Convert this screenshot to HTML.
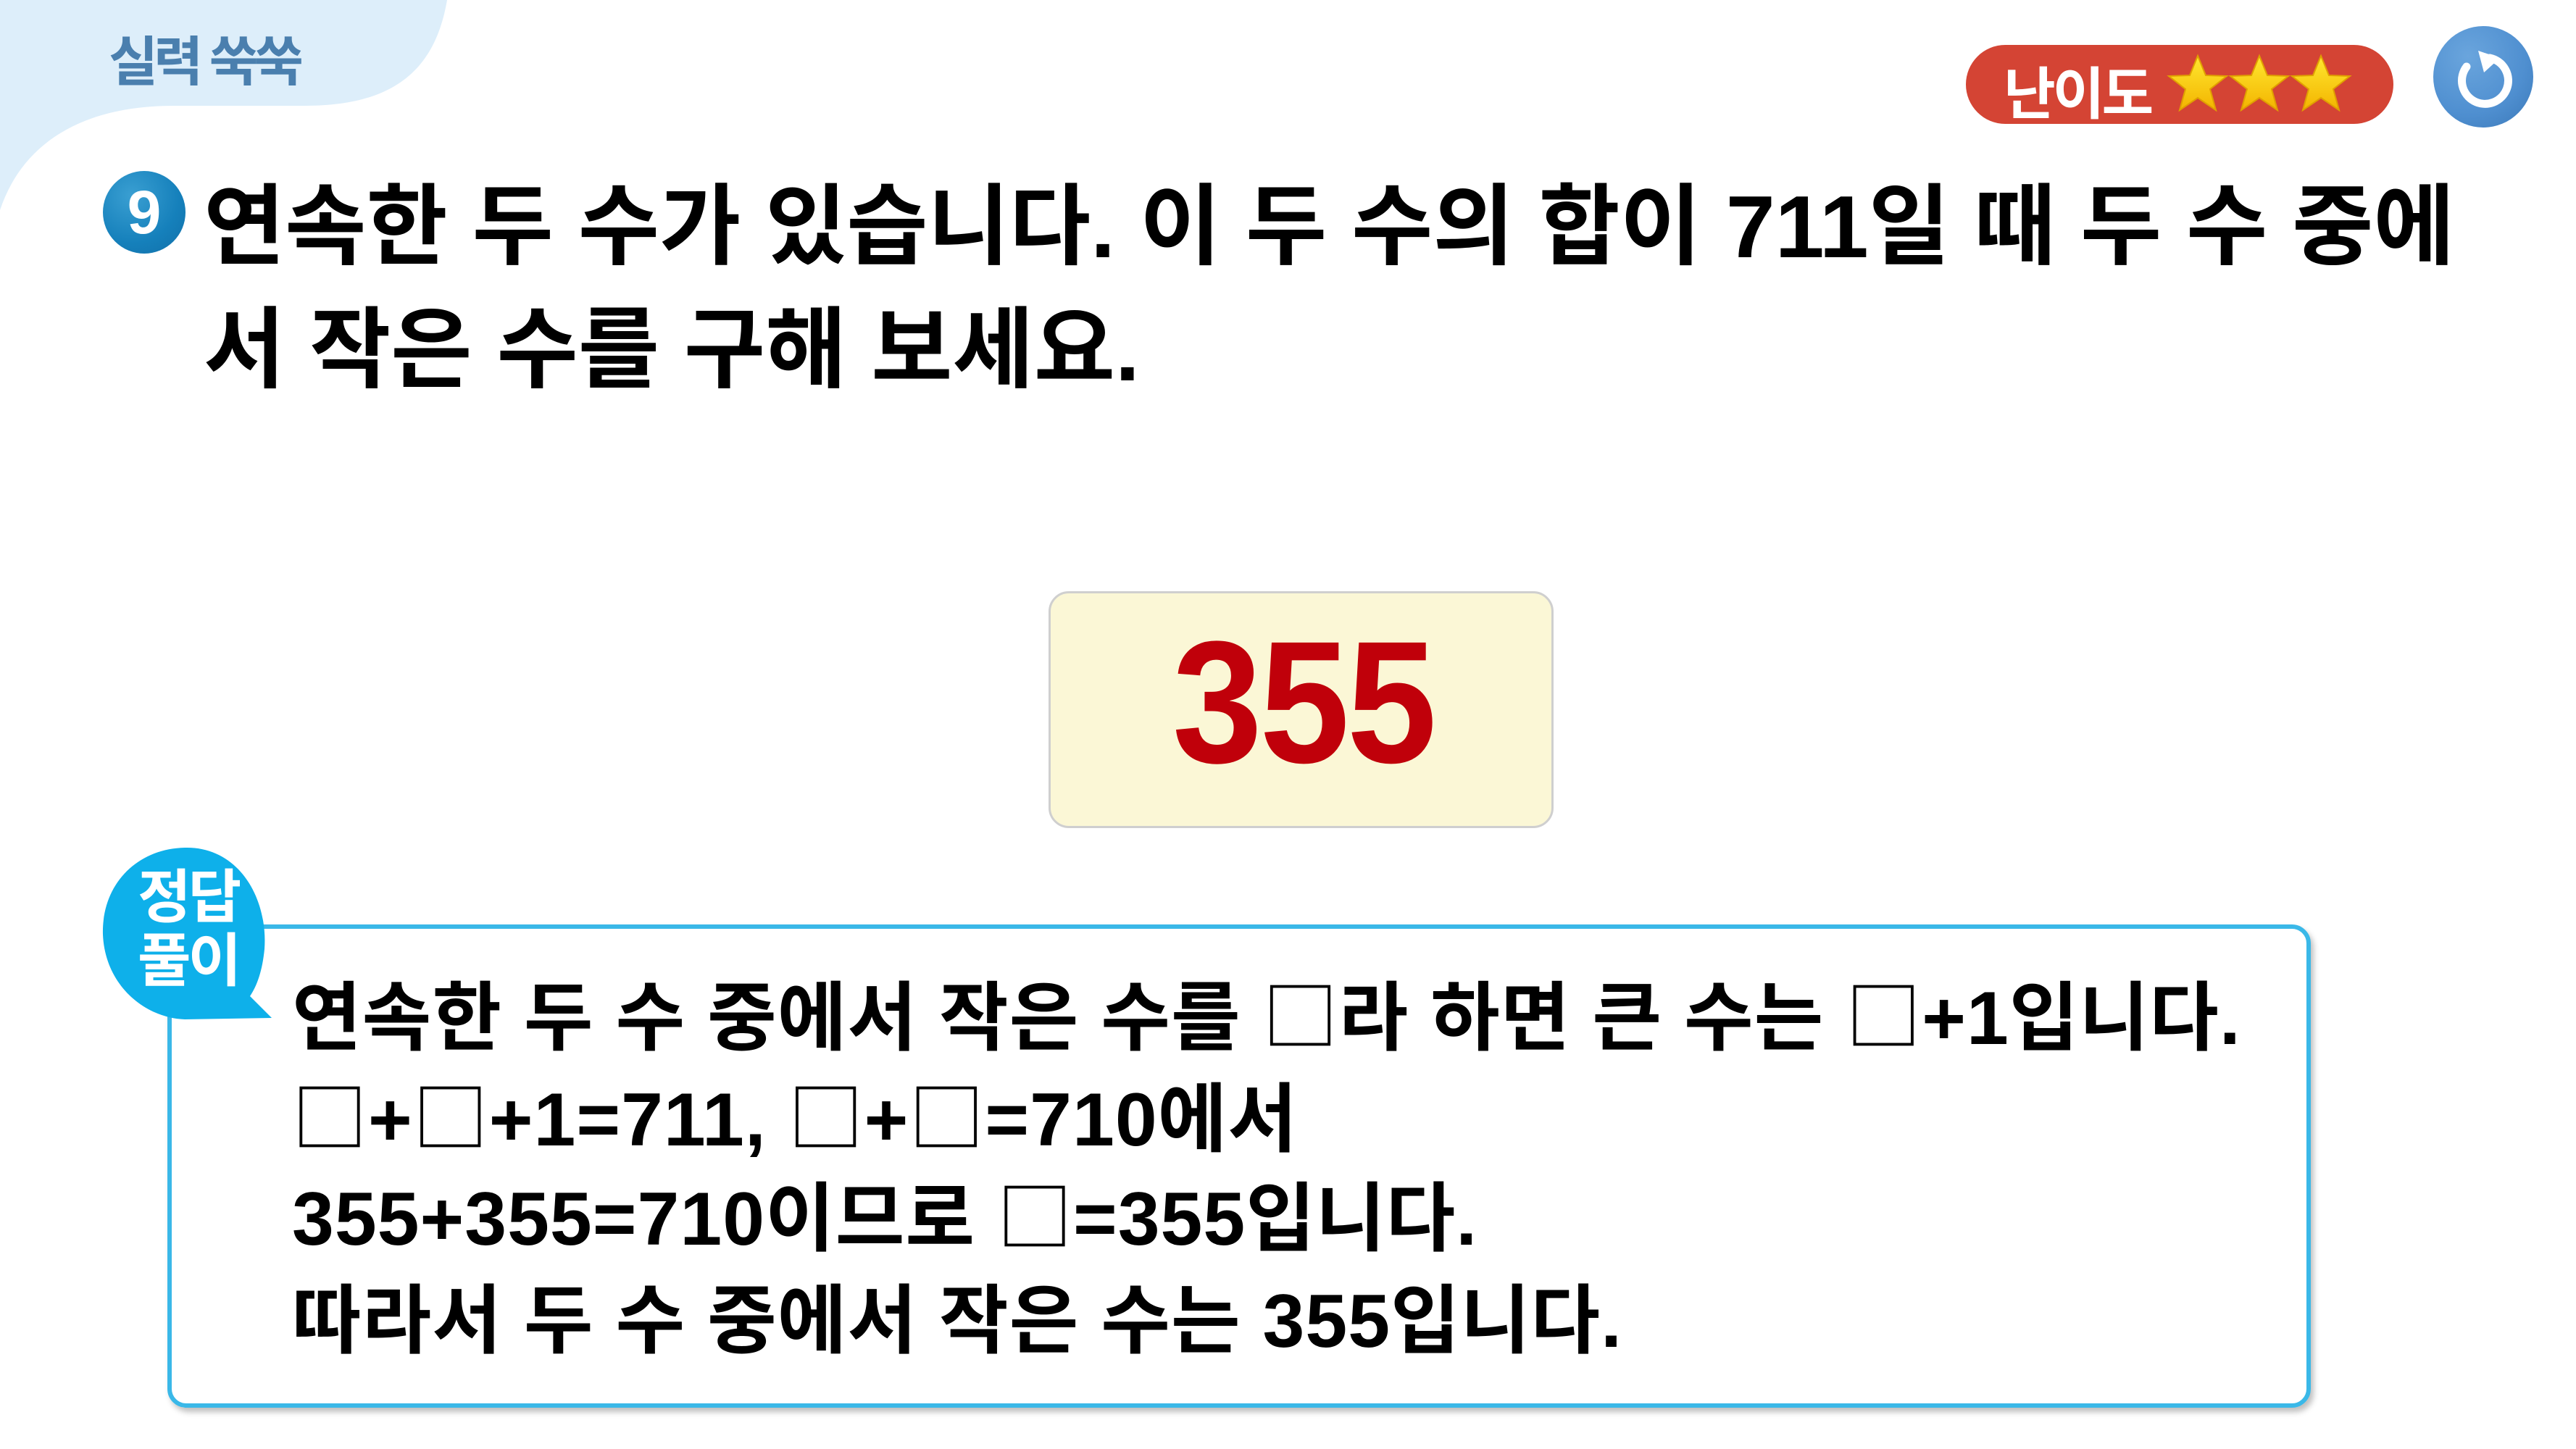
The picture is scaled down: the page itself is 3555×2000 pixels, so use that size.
<!DOCTYPE html>
<html><head><meta charset="utf-8"><style>
*{margin:0;padding:0;box-sizing:border-box}
body{width:3555px;height:2000px;background:#fff;position:relative;overflow:hidden;font-family:"Liberation Sans","Noto Sans CJK KR",sans-serif;font-weight:bold}
.abs{position:absolute}
.q{left:281px;font-size:122px;color:#000;white-space:nowrap;letter-spacing:0}
.e{left:403px;font-size:104px;color:#000;white-space:nowrap;letter-spacing:1px}
.s{font-family:"Noto Sans CJK KR",sans-serif;font-weight:normal}
</style></head><body>
<svg class="abs" style="left:0;top:0" width="700" height="320">
<path d="M0 0 H617 C600 100 540 146 420 146 H240 C110 146 30 200 0 290 Z" fill="#ddeefa"/>
</svg>
<div class="abs" style="left:150px;top:26px;font-size:74px;color:#4a7fae;letter-spacing:-6px">실력 쑥쑥</div>

<div class="abs" style="left:142px;top:236px;width:114px;height:114px;border-radius:50%;background:radial-gradient(circle at 35% 30%,#3a9fd2,#1580bb 60%,#136fa8);color:#fff;font-size:84px;text-align:center;line-height:114px">9</div>
<div class="abs q" style="top:214px">연속한 두 수가 있습니다. 이 두 수의 합이 711일 때 두 수 중에</div>
<div class="abs q" style="top:384px">서 작은 수를 구해 보세요.</div>

<div class="abs" style="left:2713px;top:62px;width:590px;height:109px;border-radius:55px;background:#d44434"></div>
<div class="abs" style="left:2765px;top:68px;font-size:78px;color:#fff;letter-spacing:-4px">난이도</div>
<svg class="abs" style="left:2990px;top:72px" width="280" height="90" viewBox="0 0 280 90">
<defs><linearGradient id="g" x1="0" y1="0" x2="0" y2="1"><stop offset="0" stop-color="#ffe830"/><stop offset="1" stop-color="#f3b400"/></linearGradient></defs>
<g fill="url(#g)" stroke="#e0a000" stroke-width="2">
<polygon points="43,5 54,32 83,33 60,51 68,80 43,63 18,80 26,51 3,33 32,32"/>
<polygon points="128,5 139,32 168,33 145,51 153,80 128,63 103,80 111,51 88,33 117,32"/>
<polygon points="213,5 224,32 253,33 230,51 238,80 213,63 188,80 196,51 173,33 202,32"/>
</g></svg>
<div class="abs" style="left:3358px;top:36px;width:138px;height:140px;border-radius:50%;background:radial-gradient(circle at 35% 30%,#6aa5dd,#4f8fd0 60%,#3a78b8)"></div>
<svg class="abs" style="left:3358px;top:36px" width="138" height="140" viewBox="0 0 138 140">
<path d="M78 44 A32 32 0 1 1 46 56" fill="none" stroke="#fff" stroke-width="11" stroke-linecap="round"/>
<polygon points="62,34 92,44 70,64" fill="#fff"/>
</svg>

<div class="abs" style="left:1447px;top:816px;width:697px;height:327px;background:#fbf7d6;border:3px solid #cfcfcf;border-radius:28px"></div>
<div class="abs" style="left:1450px;top:834px;width:697px;text-align:center;font-size:240px;color:#c0000a;line-height:270px;letter-spacing:-4px;transform:scaleX(0.93)">355</div>

<div class="abs" style="left:231px;top:1276px;width:2958px;height:667px;border:6px solid #3ab8e8;border-radius:26px;box-shadow:4px 6px 8px rgba(0,0,0,0.25)"></div>
<svg class="abs" style="left:130px;top:1160px" width="260" height="260" viewBox="0 0 260 260">
<path d="M128 10 C200 10 240 80 235 150 C232 180 225 200 215 215 L245 245 L125 247 C70 245 15 200 12 130 C10 60 60 10 128 10 Z" fill="#0eb0ea"/>
</svg>
<div class="abs" style="left:190px;top:1195px;font-size:80px;color:#fff;line-height:88px;letter-spacing:-4px">정답<br>풀이</div>

<div class="abs e" style="top:1320px">연속한 두 수 중에서 작은 수를 <span class="s">□</span>라 하면 큰 수는 <span class="s">□</span>+1입니다.</div>
<div class="abs e" style="top:1460px"><span class="s">□</span>+<span class="s">□</span>+1=711, <span class="s">□</span>+<span class="s">□</span>=710에서</div>
<div class="abs e" style="top:1597px">355+355=710이므로 <span class="s">□</span>=355입니다.</div>
<div class="abs e" style="top:1738px">따라서 두 수 중에서 작은 수는 355입니다.</div>
</body></html>
